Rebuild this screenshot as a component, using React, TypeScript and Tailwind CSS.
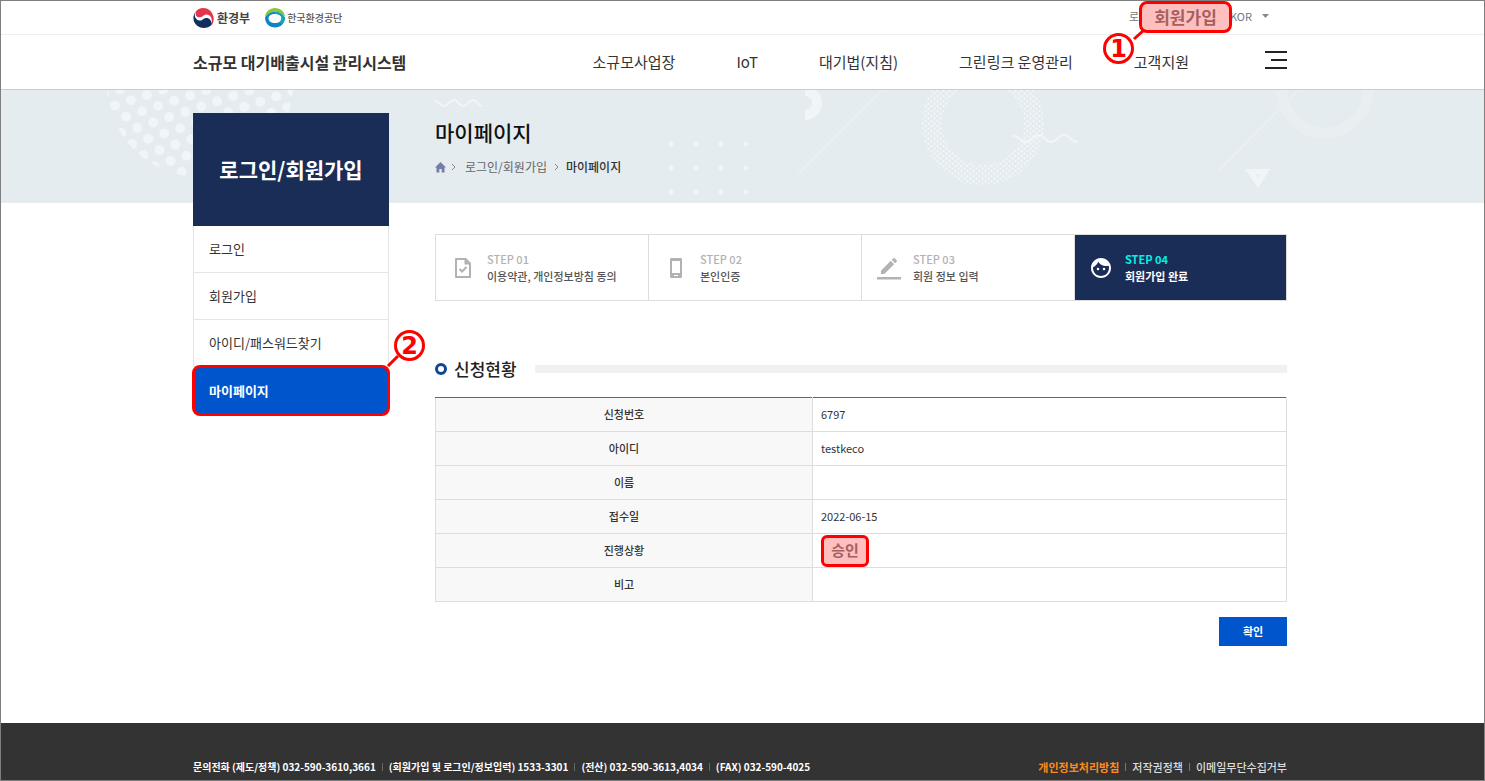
import { Fragment } from "react";
import type { ReactNode } from "react";
import { MdFace } from "react-icons/md";

const menus = ["소규모사업장", "IoT", "대기법(지침)", "그린링크 운영관리", "고객지원"];

const sideMenus = ["로그인", "회원가입", "아이디/패스워드찾기", "마이페이지"];

const rows = [
  { label: "신청번호", value: "6797" },
  { label: "아이디", value: "testkeco" },
  { label: "이름", value: "" },
  { label: "접수일", value: "2022-06-15" },
  { label: "진행상황", value: "승인", marked: true },
  { label: "비고", value: "" },
];

const contacts = [
  "문의전화 (제도/정책) 032-590-3610,3661",
  "(회원가입 및 로그인/정보입력) 1533-3301",
  "(전산) 032-590-3613,4034",
  "(FAX) 032-590-4025",
];

const policies = ["개인정보처리방침", "저작권정책", "이메일무단수집거부"];

// slanted grid of dots, clipped to the big circle on the left
const bigDots: { x: number; y: number }[] = [];
for (let i = -14; i < 20; i++) {
  for (let j = -14; j < 20; j++) {
    const x = 115 + i * 16 + j * 11.1;
    const y = 105.5 - i * 5.3 + j * 11.1;
    if (x > 95 && x < 305 && y > 80 && y < 190) bigDots.push({ x, y });
  }
}

function MinistryLogo() {
  return (
    <svg width="21" height="21" viewBox="0 0 42 42" aria-hidden="true">
      <path d="M5 10C11 0 27-1 35 8c8 9 8 20 3 27 0-9-4-15-11-16-6-1-9 2-14 2-6 0-9-4-8-11z" fill="#e5334b" />
      <path d="M5 10C-2 19 0 32 9 38c8 6 21 5 28-2 3-5 1-11-3-14-5-4-10-3-14 0-4 4-10 4-13 1-4-3-4-8-2-13z" fill="#0f2f5f" />
      <path d="M5 9c-1 7 2 12 8 12 7 0 7-6 14-6 8 0 12 8 11 20-1-8-5-13-11-13-7 0-8 6-14 5C6 27 2 18 5 9z" fill="#fff" />
    </svg>
  );
}

function KecoLogo() {
  return (
    <svg width="20" height="20" viewBox="0 0 40 40" aria-hidden="true">
      <path d="M0 18C1 7 9 0 20 0s19 7 20 17c-5-5-12-8-20-8S5 12 0 18z" fill="#8cc63f" />
      <path d="M0 19c0 12 9 20 20 20s20-8 20-20C36 12 29 8 20 8S4 12 0 19zm7 1c1-6 6-8 13-8s12 2 13 8c0 6-5 10-13 10S7 26 7 20z" fill="#0c84c6" fillRule="evenodd" />
      <path d="M40 19C36 12 29 8 20 8v4c7 0 12 2 13 8 0 4-2 7-6 9l8 3c3-4 5-8 5-13z" fill="#16a6b6" />
    </svg>
  );
}

function TaskIcon() {
  return (
    <svg width="24" height="24" viewBox="0 0 24 24" fill="currentColor" aria-hidden="true">
      <path fillRule="evenodd" d="M5 2h10l5 5v14a1 1 0 0 1-1 1H5a1 1 0 0 1-1-1V3a1 1 0 0 1 1-1zm1 2v16h12V8.500h-4.500V4z" />
      <path d="M8.500 13l2.500 2.500 4.500-4.500" fill="none" stroke="currentColor" strokeWidth="2" />
    </svg>
  );
}

function PhoneIcon() {
  return (
    <svg width="24" height="24" viewBox="0 0 24 24" fill="currentColor" aria-hidden="true">
      <path fillRule="evenodd" d="M7 2h10a1 1 0 0 1 1 1v18a1 1 0 0 1-1 1H7a1 1 0 0 1-1-1V3a1 1 0 0 1 1-1zm1 3v12h8V5zm2 14v1h4v-1z" />
    </svg>
  );
}

function PencilIcon() {
  return (
    <svg width="24" height="24" viewBox="0 0 24 24" fill="currentColor" aria-hidden="true">
      <path
        transform="translate(1.300 -0.700) scale(0.890)"
        d="M3 17.250V21h3.750L17.810 9.940l-3.750-3.750L3 17.250zM20.710 7.040a1 1 0 0 0 0-1.410l-2.340-2.340a1 1 0 0 0-1.410 0l-1.830 1.830 3.750 3.750 1.830-1.830z"
      />
      <path d="M0 21h24v2.500H0z" />
    </svg>
  );
}

function Banner() {
  return (
    <div className="absolute inset-x-0 top-0 h-[113px] overflow-hidden border-b border-[#e9eced] bg-[#e4ecef]">
      <svg className="h-full w-full" aria-hidden="true">
        <defs>
          <clipPath id="big-circle">
            <circle cx="200" cy="84" r="93" />
          </clipPath>
          <pattern id="small-dots" width="6" height="5" patternUnits="userSpaceOnUse">
            <circle cx="1.5" cy="1.2" r="1.1" fill="#f3f8fa" />
            <circle cx="4.5" cy="3.7" r="1.1" fill="#f3f8fa" />
          </pattern>
        </defs>
        <g transform="translate(-1 -90)">
          <g clipPath="url(#big-circle)" fill="#eff5f8">
            {bigDots.map((dot, i) => (
              <circle key={i} cx={dot.x} cy={dot.y} r="5" />
            ))}
          </g>
          <g fill="none" stroke="#f0f5f8" strokeWidth="2" strokeLinecap="round">
            <path d="M435 101c4 0 5 5 9 5s6-6 10-6 5 6 9 6 6-6 10-6 5 6 9 6" />
            <path d="M1014 136c6 0 6 6 12 6s7-7 13-7 6 7 12 7 7-7 13-7 7 7 13 7" />
          </g>
          <g fill="#f0f5f8">
            {[144, 168, 192].map((y) =>
              [671, 696, 721, 746].map((x) => <circle key={`${x}-${y}`} cx={x} cy={y} r="2.5" />)
            )}
          </g>
          <path d="M805 86a17 17 0 0 1 0 34v-10a7 7 0 0 0 0-14z" fill="#f0f5f8" />
          <path d="M797 175l86-86M1218 171l81-82" stroke="#eff4f6" strokeWidth="1" />
          <circle cx="983" cy="124" r="51" fill="none" stroke="url(#small-dots)" strokeWidth="20" />
          <circle cx="1325" cy="90" r="43" fill="none" stroke="#e9eef1" strokeWidth="11" />
          <path fillRule="evenodd" d="M1245 169h25l-12 19zM1256 174l2 4 2-4z" fill="#f0f5f8" />
        </g>
      </svg>
    </div>
  );
}

function Marker({ children, className }: { children: ReactNode; className: string }) {
  return (
    <span
      className={`absolute flex size-[31px] items-center justify-center rounded-full border-3 border-[#ff0000] font-['DejaVu_Sans',sans-serif] text-[24px] leading-none font-bold text-[#ff0000] ${className}`}
    >
      {children}
    </span>
  );
}

function Step({ no, text, icon, active }: { no: string; text: string; icon: ReactNode; active?: boolean }) {
  return (
    <li
      className={
        active
          ? "flex flex-1 items-center gap-3 bg-[#1a2d57] pl-[14px] text-white"
          : "flex flex-1 items-center gap-3 border-r border-[#ddd] pl-[15px] text-[#b2b2b2]"
      }
    >
      {icon}
      <div className="text-[11px] leading-[17px] font-medium">
        <p className={active ? "font-bold text-[#00f0e6]" : ""}>{no}</p>
        <p className={active ? "font-bold" : "text-[#555]"}>{text}</p>
      </div>
    </li>
  );
}

export default function App() {
  return (
    <div className="flex min-h-screen flex-col border border-[#7f7f7f] bg-white font-['Noto_Sans_CJK_KR',sans-serif] text-[#333]">
      <header>
        <div className="border-b border-[#eee]">
          <div className="mx-auto flex h-[33px] w-full max-w-[1099px] items-center pr-[5px]">
            <a href="#" className="flex items-center gap-[3px] text-[12px] font-bold text-[#444]">
              <MinistryLogo />
              환경부
            </a>
            <a href="#" className="ml-[15px] flex items-center gap-[2px] text-[10px] font-medium text-[#555]">
              <KecoLogo />
              한국환경공단
            </a>
            <div className="ml-auto flex h-full items-start pr-[18px] text-[11px] text-[#777]">
              <a href="#" aria-label="로그인" className="leading-[30px]">로</a>
              <div className="relative z-10">
                <a
                  href="#"
                  className="flex h-8 w-[93px] items-center justify-center rounded-lg border-3 border-[#ff0000] bg-[#ffbfbf] text-[17px] font-bold text-[#a65f5f]"
                >
                  회원가입
                </a>
                <svg className="absolute top-[29px] -left-[7px]" width="12" height="12" aria-hidden="true">
                  <path d="M2 9l9-8" stroke="#ff0000" strokeWidth="3" />
                </svg>
                <Marker className="top-8 -left-9">1</Marker>
              </div>
              <div className="relative -ml-1">
                <select aria-label="언어" className="h-[30px] w-[41px] appearance-none bg-transparent pl-[2px]">
                  <option>KOR</option>
                </select>
                <svg className="pointer-events-none absolute top-[13px] right-0" width="7" height="4" aria-hidden="true">
                  <path d="M0 0h7L3.500 4z" fill="#888" />
                </svg>
              </div>
            </div>
          </div>
        </div>
        <div className="border-b border-[#ccc]">
          <div className="mx-auto flex h-[54px] w-full max-w-[1099px] items-center pr-[5px]">
            <h1 className="text-[16px] font-bold">
              <a href="#">소규모 대기배출시설 관리시스템</a>
            </h1>
            <nav className="ml-auto flex gap-[61px] text-[15px]">
              {menus.map((menu) => (
                <a key={menu} href="#">{menu}</a>
              ))}
            </nav>
            <button type="button" aria-label="전체메뉴" className="mb-1 ml-[76px] flex w-[22px] flex-col items-end gap-[6px]">
              <span className="h-[2px] w-full bg-[#222]" />
              <span className="h-[2px] w-4 bg-[#222]" />
              <span className="h-[2px] w-full bg-[#222]" />
            </button>
          </div>
        </div>
      </header>

      <main className="relative">
        <Banner />
        <div className="relative mx-auto flex w-full max-w-[1099px] gap-[46px] pr-[5px] pb-[77px]">
          <aside className="w-[196px] shrink-0 pt-[23px]">
            <h2 className="flex h-[113px] items-center justify-center bg-[#1a2d57] text-[21px] font-bold text-white">
              로그인/회원가입
            </h2>
            <ul className="text-[13px]">
              {sideMenus.map((menu) =>
                menu === "마이페이지" ? (
                  <li key={menu} className="relative">
                    <a
                      href="#"
                      className="-mx-px -mt-[2px] flex h-[51px] items-center rounded-lg border-3 border-[#ff0000] bg-[#0055cc] pl-[14px] font-bold text-white"
                    >
                      {menu}
                    </a>
                    <svg className="absolute -top-3 -right-[11px]" width="14" height="14" aria-hidden="true">
                      <path d="M2 13L12 3" stroke="#ff0000" strokeWidth="3" />
                    </svg>
                    <Marker className="-top-[35px] -right-9">2</Marker>
                  </li>
                ) : (
                  <li key={menu} className="border-x border-b border-[#e5e5e5]">
                    <a href="#" className="flex h-[46px] items-center pl-[15px]">{menu}</a>
                  </li>
                )
              )}
            </ul>
          </aside>

          <section className="min-w-0 flex-1 pt-[26px]">
            <h2 className="text-[21px] leading-8 font-medium text-[#111]">마이페이지</h2>
            <div className="mt-[10px] flex items-center text-[12px] leading-[18px] text-[#666]">
              <a href="#" aria-label="홈">
                <svg width="11" height="11" viewBox="0 0 11 11" fill="#747da3" aria-hidden="true">
                  <path d="M5.500 0L11 5.600H9.500V10.500H6.700V7H4.300v3.500H1.500V5.600H0z" />
                </svg>
              </a>
              <svg className="mr-[9px] ml-[5px]" width="5" height="8" fill="none" stroke="#888" aria-hidden="true">
                <path d="M1 1l3 3-3 3" />
              </svg>
              <a href="#">로그인/회원가입</a>
              <svg className="mx-[7px]" width="5" height="8" fill="none" stroke="#888" aria-hidden="true">
                <path d="M1 1l3 3-3 3" />
              </svg>
              <span className="font-medium text-[#333]">마이페이지</span>
            </div>

            <ol className="mt-[58px] flex h-[67px] border border-[#ddd]">
              <Step no="STEP 01" text="이용약관, 개인정보방침 동의" icon={<TaskIcon />} />
              <Step no="STEP 02" text="본인인증" icon={<PhoneIcon />} />
              <Step no="STEP 03" text="회원 정보 입력" icon={<PencilIcon />} />
              <Step no="STEP 04" text="회원가입 완료" icon={<MdFace size={24} />} active />
            </ol>

            <div className="mt-14 flex items-center">
              <span className="size-3 rounded-full border-[3px] border-[#0f4596]" />
              <h3 className="ml-[7px] text-[17px] leading-6 font-medium text-[#222]">신청현황</h3>
              <span className="ml-[18px] h-2 flex-1 bg-[#f0f0f0]" />
            </div>

            <table className="mt-4 w-full table-fixed border-collapse border border-[#ddd] border-t-[#666] text-[11px]">
              <tbody>
                {rows.map((row) => (
                  <tr key={row.label} className="h-[34px] border-b border-[#ddd]">
                    <th scope="row" className="w-[377px] border-r border-[#ddd] bg-[#f8f8f8] p-0 font-medium">
                      {row.label}
                    </th>
                    <td className="py-0 pr-2 pl-2">
                      {row.marked ? (
                        <span className="flex h-8 w-12 items-center justify-center rounded-md border-3 border-[#ff0000] bg-[#ffbfbf] text-[15px] font-bold text-[#a65f5f]">
                          {row.value}
                        </span>
                      ) : (
                        row.value
                      )}
                    </td>
                  </tr>
                ))}
              </tbody>
            </table>

            <div className="mt-[15px] flex justify-end">
              <button type="button" className="h-[29px] w-[68px] bg-[#0055cc] text-[11px] font-bold text-white">
                확인
              </button>
            </div>
          </section>
        </div>
      </main>

      <footer className="flex-1 bg-[#333] pt-9">
        <div className="mx-auto flex w-full max-w-[1099px] items-center justify-between pr-[5px] leading-4">
          <div className="flex items-center gap-[6px] text-[10px] font-bold text-white">
            {contacts.map((contact, i) => (
              <Fragment key={contact}>
                {i > 0 && <span className="h-2 w-px bg-[#666]" />}
                <span>{contact}</span>
              </Fragment>
            ))}
          </div>
          <div className="flex items-center gap-[6px] text-[11px] font-medium text-[#ddd]">
            {policies.map((policy, i) => (
              <Fragment key={policy}>
                {i > 0 && <span className="h-2 w-px bg-[#777]" />}
                <a href="#" className={i === 0 ? "font-bold text-[#ff8a1c]" : ""}>{policy}</a>
              </Fragment>
            ))}
          </div>
        </div>
      </footer>
    </div>
  );
}
